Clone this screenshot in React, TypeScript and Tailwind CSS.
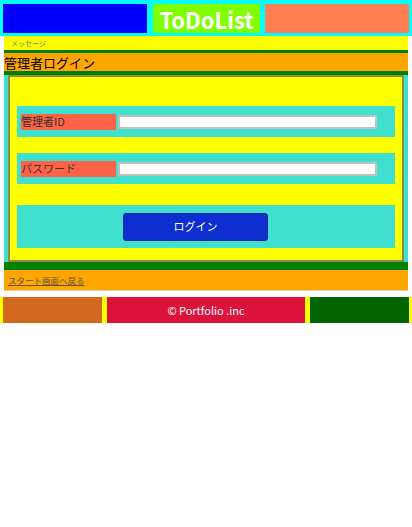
const font = "font-['Noto_Sans_CJK_JP','Noto_Sans',sans-serif]";

function FormRow({ label, type }: { label: string; type: string }) {
  return (
    <div className="mx-[7px] flex h-[31px] items-center bg-[#40e0d0] pl-[4px]">
      <label className="flex h-[16px] w-[95px] items-center bg-[#ff6347] text-[11px] leading-none text-[#333]">
        {label}
      </label>
      <input
        type={type}
        className="ml-[2px] h-[14px] w-[259px] border-2 border-[#c0c0c0] bg-white outline-none"
      />
    </div>
  );
}

export default function App() {
  return (
    <div className={`${font} w-[412px] bg-white`}>
      {/* header */}
      <header className="flex bg-[#00ffff] px-[3px] pt-[4px] pb-[3px]">
        <div className="h-[29px] w-[144px] bg-[#0000ff]" />
        <div className="ml-[6px] flex h-[29px] w-[107px] items-center justify-center bg-[#7fff00] text-[22px] font-bold leading-none text-white">
          ToDoList
        </div>
        <div className="ml-[5px] h-[29px] w-[144px] bg-[#ff7f50]" />
      </header>

      <main className="mx-[4px]">
        <div className="flex h-[14px] items-center bg-[#ffff00] pl-[7px] text-[7px] leading-none text-[#777]">
          メッセージ
        </div>
        <h2 className="flex h-[25px] items-center border-t-[3px] border-b-[4px] border-[#008000] bg-[#ffa500] text-[13px] leading-none text-black">
          管理者ログイン
        </h2>

        <div className="bg-[#40e0d0] px-[4px]">
          <form className="flex flex-col border-2 border-[#8c8c46] bg-[#ffff00] pt-[29px] pb-[12px]">
            <FormRow label="管理者ID" type="text" />
            <div className="h-[16px]" />
            <FormRow label="パスワード" type="password" />
            <div className="h-[21px]" />
            <div className="mx-[7px] flex h-[43px] items-center bg-[#40e0d0]">
              <button
                type="button"
                className="ml-[106px] flex h-[28px] w-[145px] items-center justify-center rounded-[3px] border border-[#0a2596] bg-[#0e2ecf] text-[11px] leading-none text-white"
              >
                ログイン
              </button>
            </div>
          </form>
        </div>

        <div className="h-[8px] bg-[#008000]" />
        <div className="flex h-[21px] items-center border-b border-[#d8d3a0] bg-[#ffa500] pl-[4px]">
          <a href="#" className="text-[8.5px] leading-none text-[#5e5437] underline">
            スタート画面へ戻る
          </a>
        </div>
      </main>

      {/* footer */}
      <footer className="mt-[6px] flex h-[26px] bg-[#ffff00] px-[3px]">
        <div className="w-[99px] bg-[#d2691e]" />
        <div className="ml-[5px] flex w-[198px] items-center justify-center bg-[#dc143c] text-[11px] leading-none text-white">
          © Portfolio .inc
        </div>
        <div className="ml-[5px] w-[99px] bg-[#006400]" />
      </footer>
    </div>
  );
}
